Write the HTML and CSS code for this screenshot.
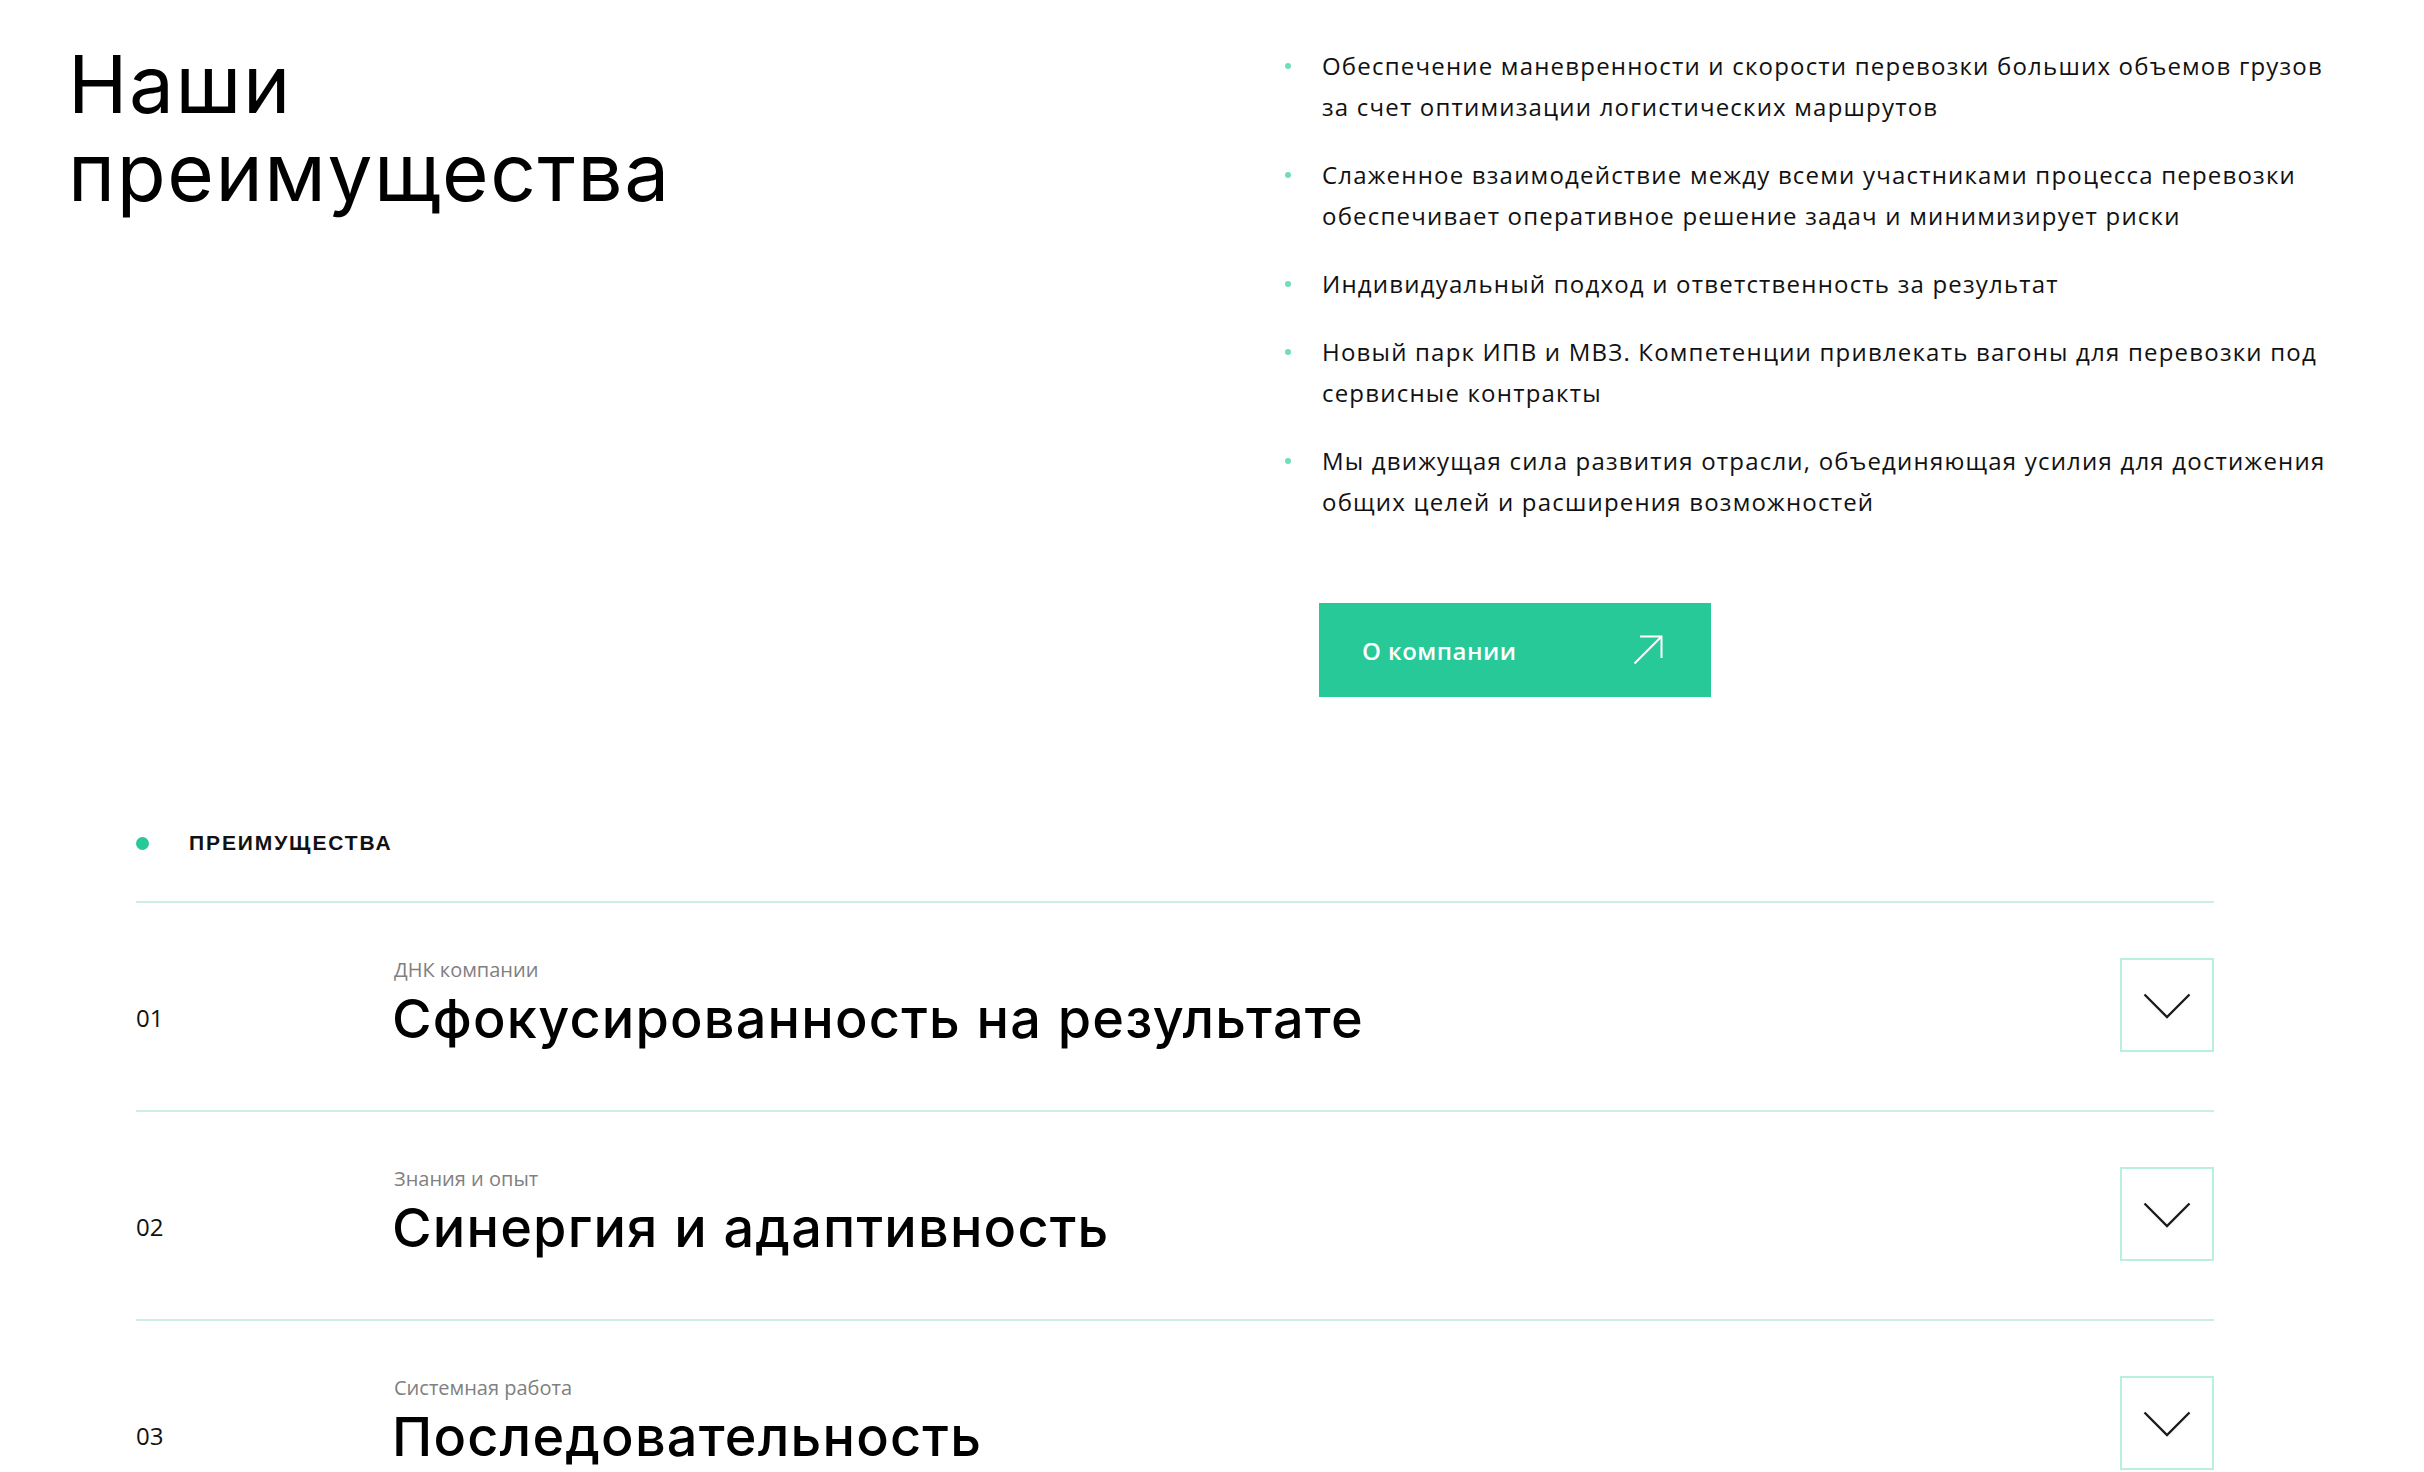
FILE: index.html
```html
<!DOCTYPE html>
<html lang="ru">
<head>
<meta charset="utf-8">
<title>Наши преимущества</title>
<link rel="stylesheet" href="styles.css">
</head>
<body>
<section class="intro">
  <h1 class="intro-title">Наши<br>преимущества</h1>
  <div class="intro-side">
    <ul class="perks">
      <li class="perk">Обеспечение маневренности и скорости перевозки больших объемов грузов<br>за счет оптимизации логистических маршрутов</li>
      <li class="perk">Слаженное взаимодействие между всеми участниками процесса перевозки<br>обеспечивает оперативное решение задач и минимизирует риски</li>
      <li class="perk">Индивидуальный подход и ответственность за результат</li>
      <li class="perk">Новый парк ИПВ и МВЗ. Компетенции привлекать вагоны для перевозки под<br>сервисные контракты</li>
      <li class="perk">Мы движущая сила развития отрасли, объединяющая усилия для достижения<br>общих целей и расширения возможностей</li>
    </ul>
    <a class="btn" href="#">
      <span class="btn-text">О компании</span>
      <svg class="btn-icon" width="30" height="30" viewBox="0 0 30 30" fill="none" stroke="#fff" stroke-width="2"><path d="M1.5 28.5 L28.5 1.5 M7 1.5 H28.5 V23"/></svg>
    </a>
  </div>
</section>

<section class="adv">
  <div class="adv-label"><span class="adv-dot"></span><span class="adv-label-text">ПРЕИМУЩЕСТВА</span></div>
  <div class="adv-list">
    <div class="adv-row">
      <div class="adv-num">01</div>
      <div class="adv-body">
        <div class="adv-sub">ДНК компании</div>
        <div class="adv-title">Сфокусированность на результате</div>
      </div>
      <button class="adv-toggle" type="button"><svg width="48" height="26" viewBox="0 0 48 26" fill="none" stroke="#1c1c1c" stroke-width="2.4"><path d="M1.5 1.5 L24 24 L46.5 1.5"/></svg></button>
    </div>
    <div class="adv-row">
      <div class="adv-num">02</div>
      <div class="adv-body">
        <div class="adv-sub">Знания и опыт</div>
        <div class="adv-title">Синергия и адаптивность</div>
      </div>
      <button class="adv-toggle" type="button"><svg width="48" height="26" viewBox="0 0 48 26" fill="none" stroke="#1c1c1c" stroke-width="2.4"><path d="M1.5 1.5 L24 24 L46.5 1.5"/></svg></button>
    </div>
    <div class="adv-row">
      <div class="adv-num">03</div>
      <div class="adv-body">
        <div class="adv-sub">Системная работа</div>
        <div class="adv-title">Последовательность</div>
      </div>
      <button class="adv-toggle" type="button"><svg width="48" height="26" viewBox="0 0 48 26" fill="none" stroke="#1c1c1c" stroke-width="2.4"><path d="M1.5 1.5 L24 24 L46.5 1.5"/></svg></button>
    </div>
  </div>
</section>
</body>
</html>
```

FILE: styles.css
```css
* { box-sizing: border-box; }
html, body { margin: 0; padding: 0; background: #fff; }
body {
  font-family: "Open Sans", "Noto Sans", sans-serif;
  color: #111;
}

.intro {
  display: grid;
  grid-template-columns: 1251px 1fr;
  padding: 40px 72px 0 68px;
}
.intro-title {
  margin: 0;
  font-family: Inter, "Liberation Sans", sans-serif;
  font-weight: 400;
  font-size: 80px;
  line-height: 88px;
  letter-spacing: 1.6px;
  color: #000;
}
.intro-side { padding-top: 5px; }

.perks {
  list-style: none;
  margin: 0;
  padding: 0;
  display: flex;
  flex-direction: column;
  gap: 27px;
}
.perk {
  position: relative;
  font-size: 24px;
  font-weight: 500;
  line-height: 41px;
  letter-spacing: 0.05em;
  padding-left: 3px;
  white-space: nowrap;
  color: #111;
}
.perk::before {
  content: "";
  position: absolute;
  left: -34px;
  top: 18px;
  width: 6px;
  height: 6px;
  border-radius: 50%;
  background: #6fdcbb;
}

.btn {
  margin-top: 81px;
  display: flex;
  align-items: center;
  justify-content: space-between;
  width: 392px;
  height: 94px;
  padding: 0 48px 0 43px;
  background: #26c997;
  color: #fff;
  text-decoration: none;
}
.btn-text {
  font-size: 24px;
  font-weight: 600;
  letter-spacing: 0.02em;
}
.btn-icon { display: block; }

.adv {
  padding: 0 210px 200px 136px;
  margin-top: 134px;
}
.adv-label {
  display: flex;
  align-items: center;
  gap: 40px;
  height: 24px;
}
.adv-dot {
  width: 13px;
  height: 13px;
  border-radius: 50%;
  background: #26c997;
}
.adv-label-text {
  font-family: "Liberation Sans", Arial, sans-serif;
  font-weight: 700;
  font-size: 21px;
  letter-spacing: 0.09em;
  color: #111;
}

.adv-list {
  margin-top: 46px;
  border-top: 2px solid #cdeee5;
}
.adv-row {
  display: grid;
  grid-template-columns: 256px 1fr 94px;
  align-items: start;
  padding: 55px 0 58px;
  border-bottom: 2px solid #cdeee5;
}
.adv-num {
  padding-top: 45px;
  font-size: 24px;
  line-height: 30px;
  color: #111;
}
.adv-sub {
  font-size: 20px;
  line-height: 24px;
  color: #808080;
  padding-left: 2px;
}
.adv-title {
  margin-top: 7px;
  font-family: Inter, "Liberation Sans", sans-serif;
  font-size: 54px;
  line-height: 60px;
  font-weight: 500;
  letter-spacing: 1.2px;
  color: #000;
}
.adv-toggle {
  width: 94px;
  height: 94px;
  margin: 0;
  padding: 0;
  border: 2px solid #b9efdf;
  background: #fff;
  display: flex;
  align-items: center;
  justify-content: center;
  cursor: pointer;
}
.adv-toggle svg { display: block; margin-top: 2px; }
```
